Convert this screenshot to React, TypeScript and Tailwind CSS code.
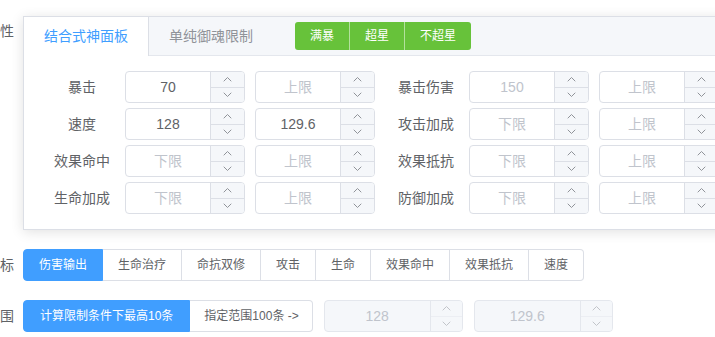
import React from "react"

const font = { fontFamily: '"Liberation Sans", "Noto Sans CJK SC", sans-serif' }

function Arrow({ up }: { up?: boolean }) {
    return (
        <svg width="9" height="6" viewBox="0 0 9 6" fill="none" stroke="#909399" strokeWidth="1" strokeLinecap="round">
            {up ? <path d="M1 5 L4.5 1.5 L8 5" /> : <path d="M1 1 L4.5 4.5 L8 1" />}
        </svg>
    )
}

interface NumProps {
    value?: string
    placeholder?: string
    width: number
    disabled?: boolean
    spin?: number
}

function InputNumber({ value, placeholder, width, disabled, spin = 34 }: NumProps) {
    const text = value ?? placeholder
    return (
        <div
            className={`flex h-8 shrink-0 rounded-[4px] border overflow-hidden ${disabled ? "border-[#e4e7ed] bg-[#f5f7fa]" : "border-[#dcdfe6] bg-white"}`}
            style={{ width }}
        >
            <div className={`flex-1 flex items-center justify-center text-[14px] ${value && !disabled ? "text-[#606266]" : "text-[#c0c4cc]"}`}>
                {text}
            </div>
            <div className={`flex flex-col border-l ${disabled ? "border-[#e4e7ed]" : "border-[#dcdfe6]"} bg-[#f5f7fa]`} style={{ width: spin }}>
                <div className={`flex-1 flex items-center justify-center border-b ${disabled ? "border-[#e4e7ed] opacity-50" : "border-[#dcdfe6]"}`}>
                    <Arrow up />
                </div>
                <div className={`flex-1 flex items-center justify-center ${disabled ? "opacity-50" : ""}`}>
                    <Arrow />
                </div>
            </div>
        </div>
    )
}

const rows = [
    { a: "暴击", v1: "70", p1: "下限", p2: "上限", b: "暴击伤害", p3: "150", p4: "上限" },
    { a: "速度", v1: "128", v2: "129.6", p1: "下限", p2: "上限", b: "攻击加成", p3: "下限", p4: "上限" },
    { a: "效果命中", p1: "下限", p2: "上限", b: "效果抵抗", p3: "下限", p4: "上限" },
    { a: "生命加成", p1: "下限", p2: "上限", b: "防御加成", p3: "下限", p4: "上限" },
]

const targets = ["伤害输出", "生命治疗", "命抗双修", "攻击", "生命", "效果命中", "效果抵抗", "速度"]

export default function App() {
    return (
        <div className="w-[715px] h-[337px] overflow-hidden bg-white pt-4" style={font}>
            {/* panel */}
            <div className="flex">
                <div className="w-[23px] shrink-0 pr-[11px] text-right text-[14px] leading-[18px] text-[#606266] mt-[6px]">性</div>
                <div className="w-[760px] shrink-0 border border-[#dcdfe6] bg-white shadow-[0_2px_12px_0_rgba(0,0,0,0.12)]">
                    <div className="flex items-center h-[39px] bg-[#f5f7fa] border-b border-[#e4e7ed]">
                        <div className="h-[39px] -mb-px flex items-center px-5 bg-white border-r border-[#dcdfe6] text-[14px] text-[#409eff]">结合式神面板</div>
                        <div className="px-5 text-[14px] text-[#909399]">单纯御魂限制</div>
                        <div className="flex ml-[22px] h-7 text-[12px] text-white">
                            <button className="px-[15px] bg-[#67c23a] rounded-l-[3px]">满暴</button>
                            <button className="px-[15px] bg-[#67c23a] border-l border-white/50">超星</button>
                            <button className="px-[15px] bg-[#67c23a] border-l border-white/50 rounded-r-[3px]">不超星</button>
                        </div>
                    </div>
                    <div className="p-[15px] flex flex-col gap-[5px]">
                        {rows.map((r) => (
                            <div key={r.a} className="flex items-center h-8">
                                <div className="w-[86px] shrink-0 text-center text-[14px] text-[#606266]">{r.a}</div>
                                <InputNumber width={120} value={r.v1} placeholder={r.p1} />
                                <div className="ml-[10px]"><InputNumber width={120} value={r.v2} placeholder={r.p2} /></div>
                                <div className="ml-[8px] w-[86px] shrink-0 text-center text-[14px] text-[#606266]">{r.b}</div>
                                <InputNumber width={120} placeholder={r.p3} />
                                <div className="ml-[10px]"><InputNumber width={120} placeholder={r.p4} /></div>
                            </div>
                        ))}
                    </div>
                </div>
            </div>

            {/* target */}
            <div className="flex items-center mt-[19px]">
                <div className="w-[23px] shrink-0 pr-[11px] text-right text-[14px] text-[#606266]">标</div>
                <div className="flex h-8 text-[12px]">
                    {targets.map((t, i) => (
                        <div
                            key={t}
                            className={`flex items-center px-[15px] border-y border-r ${i === 0 ? "bg-[#409eff] border-[#409eff] border-l text-white rounded-l-[4px]" : "bg-white border-[#dcdfe6] text-[#606266]"} ${i === targets.length - 1 ? "rounded-r-[4px]" : ""}`}
                        >
                            {t}
                        </div>
                    ))}
                </div>
            </div>

            {/* range */}
            <div className="flex items-center mt-[19px]">
                <div className="w-[23px] shrink-0 pr-[11px] text-right text-[14px] text-[#606266]">围</div>
                <div className="flex h-8 text-[12px]">
                    <div className="flex items-center px-[16px] bg-[#409eff] border border-[#409eff] text-white rounded-l-[4px]">计算限制条件下最高10条</div>
                    <div className="flex items-center pl-[14px] pr-[13px] bg-white border-y border-r border-[#dcdfe6] text-[#606266] rounded-r-[4px]">指定范围100条 -&gt;</div>
                </div>
                <div className="ml-[11px]"><InputNumber width={139} value="128" disabled spin={32} /></div>
                <div className="ml-[11px]"><InputNumber width={139} value="129.6" disabled spin={32} /></div>
            </div>
        </div>
    )
}
